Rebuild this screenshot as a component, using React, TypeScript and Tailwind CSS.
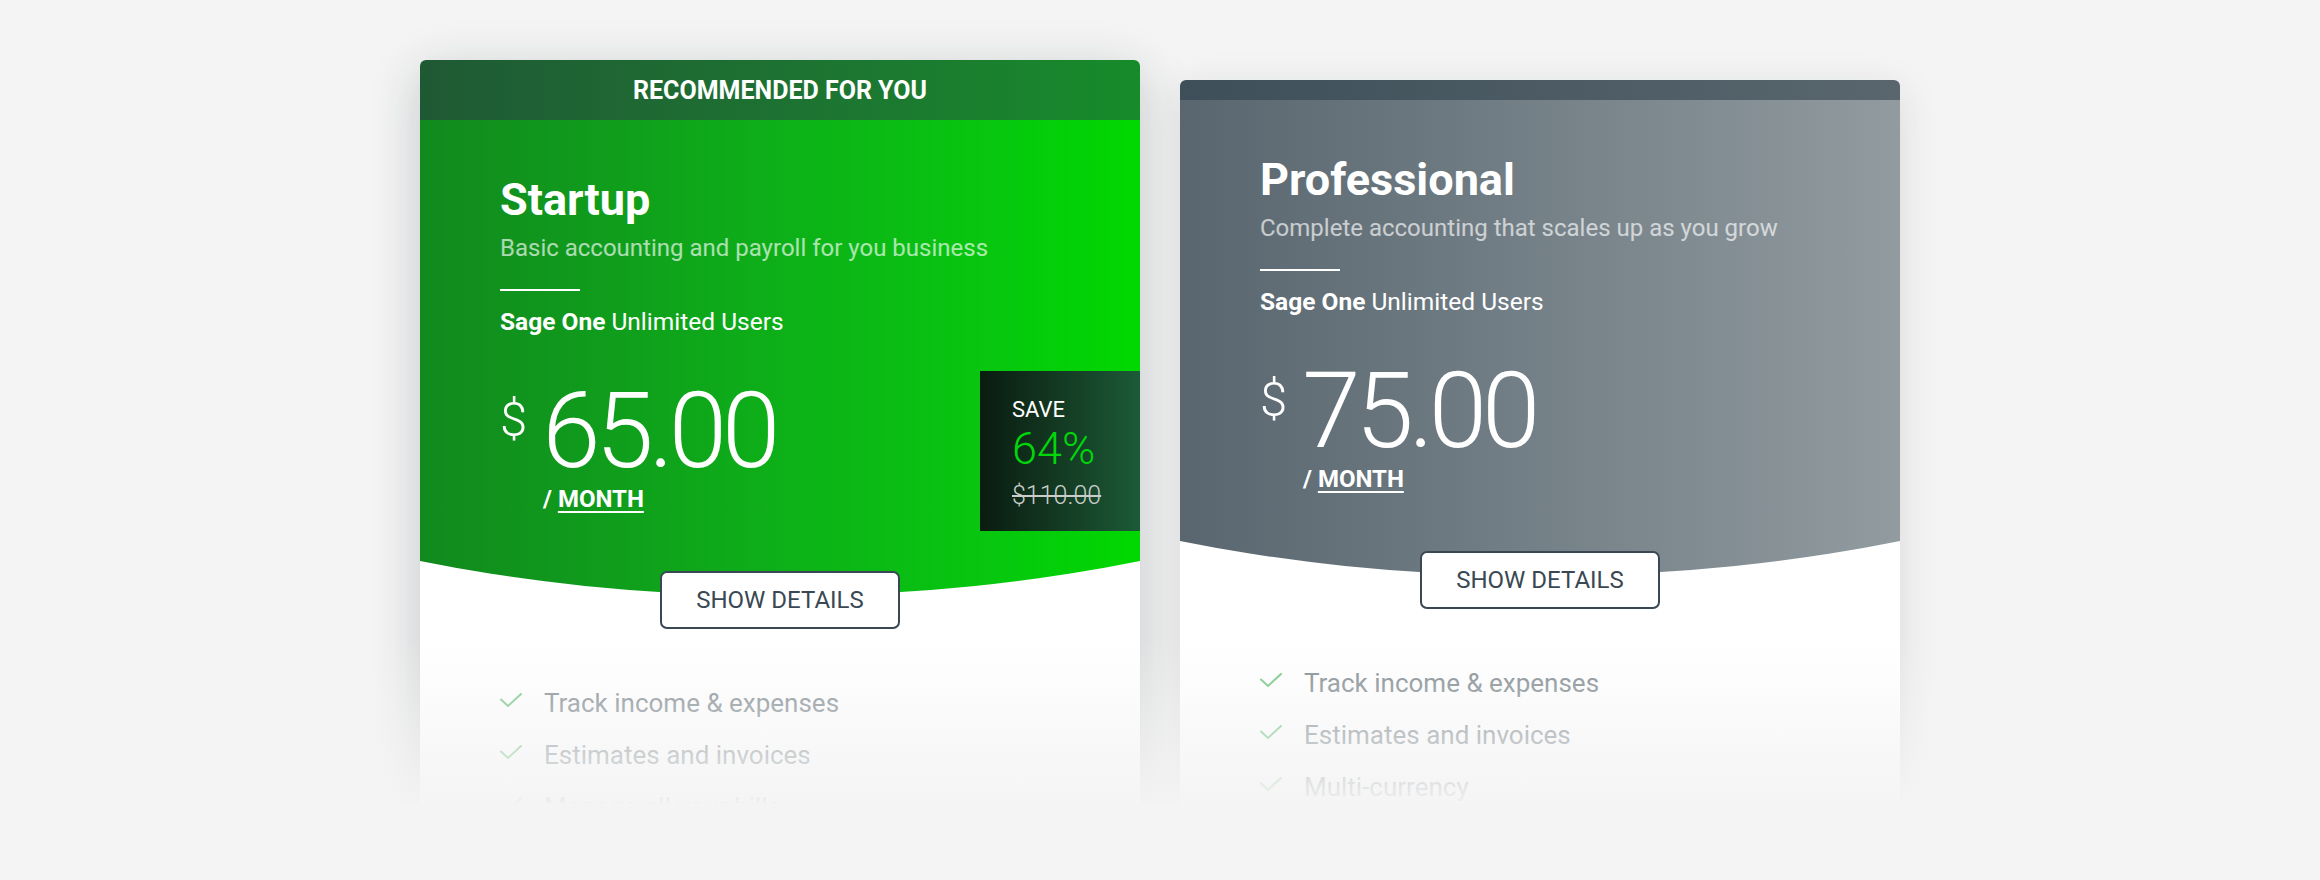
import React from "react";

type Plan = {
  title: string;
  desc: string;
  price: string;
  features: string[];
};

const CheckIcon = () => (
  <svg width="22" height="14" viewBox="0 0 22 14" fill="none" className="mt-[3px] shrink-0">
    <path d="M1 6.5 L8 13 L21 1" stroke="#6cc47c" strokeWidth="2" strokeLinecap="round" strokeLinejoin="round" />
  </svg>
);

function CardBody({ plan, bodyClass, save }: { plan: Plan; bodyClass: string; save?: boolean }) {
  return (
    <>
      <div className={"relative h-[476px] px-[80px] pt-[57px] text-white [clip-path:ellipse(1000px_522px_at_50%_-46px)] " + bodyClass}>
        <h2 className="text-[45px] leading-none font-bold">{plan.title}</h2>
        <p className="mt-[14px] text-[24px] leading-none text-white/65">{plan.desc}</p>
        <div className="mt-[29px] h-[2px] w-20 bg-white" />
        <p className="mt-[19px] text-[24.5px] leading-none">
          <span className="font-bold">Sage One</span> Unlimited Users
        </p>
        <div className="mt-[36px] flex items-start">
          <div className="mt-[8px] flex flex-col">
            <div className="flex items-start">
              <span className="mt-[16px] text-[49px] leading-none font-light">$</span>
              <span className="ml-[15px] text-[105px] leading-none font-light tracking-[-5px]">{plan.price}</span>
            </div>
            <div className="mt-[3px] pl-[43px] text-[24px] leading-none font-bold">
              / <span className="underline decoration-2 underline-offset-[4px]">MONTH</span>
            </div>
          </div>
          {save && (
            <div className="ml-auto -mr-[80px] flex h-[160px] w-[160px] flex-col pl-[32px] pt-[28px] bg-linear-to-r from-[#0a1c10] to-[#1c5b37]">
              <span className="text-[22px] leading-none text-white">SAVE</span>
              <span className="mt-[5px] text-[45px] leading-none font-light text-[#00d60a]">64%</span>
              <span className="mt-[12px] text-[25px] leading-none font-light text-[#c9cdcb] line-through decoration-[1.5px]">$110.00</span>
            </div>
          )}
        </div>
      </div>
      <div className="relative z-10 -mt-[25px] flex justify-center">
        <button className="h-[58px] w-[240px] rounded-[7px] border-2 border-[#3a4853] bg-white text-[24px] leading-none text-[#3a4853]">
          SHOW DETAILS
        </button>
      </div>
      <ul className="mt-[61px] flex flex-col gap-[26px] px-[80px] pb-[120px]">
        {plan.features.map((f) => (
          <li key={f} className="flex items-start gap-[22px]">
            <CheckIcon />
            <span className="text-[26px] leading-none text-[#7b868c]">{f}</span>
          </li>
        ))}
      </ul>
    </>
  );
}

export default function App() {
  const startup: Plan = {
    title: "Startup",
    desc: "Basic accounting and payroll for you business",
    price: "65.00",
    features: ["Track income & expenses", "Estimates and invoices", "Manage all your bills"],
  };
  const pro: Plan = {
    title: "Professional",
    desc: "Complete accounting that scales up as you grow",
    price: "75.00",
    features: ["Track income & expenses", "Estimates and invoices", "Multi-currency"],
  };
  return (
    <div className="h-[880px] w-full bg-[#f4f4f4] font-[Roboto,sans-serif]">
      <div className="relative h-[803px] overflow-hidden">
        <div className="flex items-start justify-center gap-10 pt-[60px]">
          <div className="w-[720px] overflow-hidden rounded-[6px] bg-white shadow-[0_12px_50px_rgba(25,35,45,0.22)]">
            <div className="flex h-[60px] items-center justify-center bg-linear-to-r from-[#1f5934] to-[#168b2a] text-[25px] font-bold leading-none text-white">
              RECOMMENDED FOR YOU
            </div>
            <CardBody plan={startup} bodyClass="bg-linear-to-r from-[#11891e] to-[#00d800]" save />
          </div>
          <div className="mt-5 w-[720px] overflow-hidden rounded-[6px] bg-white shadow-[0_10px_40px_rgba(25,35,45,0.12)]">
            <div className="h-[20px] bg-linear-to-r from-[#3e4f59] to-[#59666e]" />
            <CardBody plan={pro} bodyClass="bg-linear-to-r from-[#59666f] to-[#919ba0]" />
          </div>
        </div>
        <div className="pointer-events-none absolute inset-x-0 bottom-0 h-[165px] bg-linear-to-b from-[#f4f4f4]/0 to-[#f4f4f4]/95" />
      </div>
    </div>
  );
}
